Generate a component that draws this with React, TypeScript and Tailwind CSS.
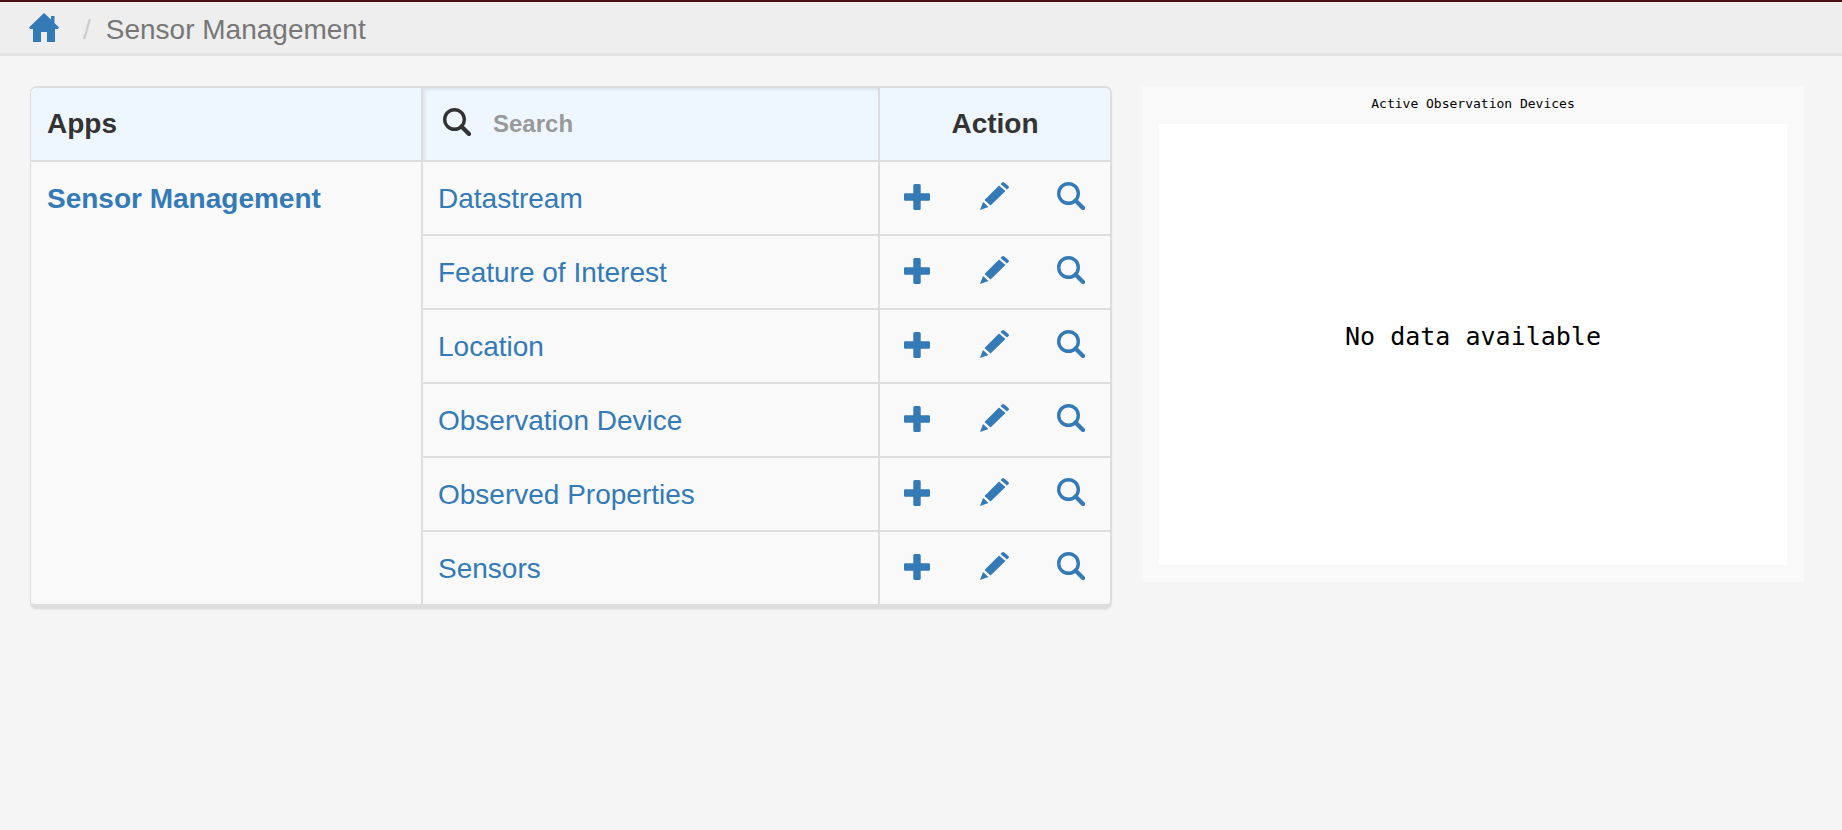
const rows = [
  "Datastream",
  "Feature of Interest",
  "Location",
  "Observation Device",
  "Observed Properties",
  "Sensors",
];

function HomeIcon() {
  return (
    <svg width="30" height="29" viewBox="0 0 30 29" className="fill-[#337ab7]">
      <path d="M15 0 L22 6.5 V3 H25.500 V10 L30 14.500 L29 16 H26 V29 H18 V19 H12 V29 H4 V16 H1 L0 14.500 Z" />
    </svg>
  );
}

function PlusIcon() {
  return (
    <svg width="26" height="26" viewBox="0 0 26 26" className="fill-[#337ab7]">
      <path d="M10.500 0 H15.200 Q16.700 0 16.700 1.500 V9.300 H24.800 Q26 9.300 26 10.500 V15.500 Q26 16.700 24.800 16.700 H16.700 V24.500 Q16.700 26 15.200 26 H10.800 Q9.300 26 9.300 24.500 V16.700 H1.200 Q0 16.700 0 15.500 V10.500 Q0 9.300 1.200 9.300 H9.300 V1.500 Q9.300 0 10.800 0 Z" />
    </svg>
  );
}

function PencilIcon() {
  return (
    <svg width="29" height="28" viewBox="0 0 29 28" className="fill-[#337ab7]">
      <path d="M22 0.500 L23.500 0 L28.500 4 L29 5.500 L27 7.500 L20.500 2 Z" />
      <path d="M19 3.500 L25.500 9 L10.500 23.500 L4.500 18 Z" />
      <path d="M3 20 L8.500 25 L0 28 Z" />
    </svg>
  );
}

function SearchIcon({ color }: { color: string }) {
  return (
    <svg width="28" height="28" viewBox="0 0 28 28" fill="none" stroke={color}>
      <circle cx="11.500" cy="11.500" r="9.800" strokeWidth="3.400" />
      <path d="M18.500 18.500 L26 26" strokeWidth="4.200" strokeLinecap="round" />
    </svg>
  );
}

export default function App() {
  return (
    <div className="min-h-[830px] bg-[#f5f5f5] font-['Liberation_Sans',Arial,sans-serif] text-[#333]">
      {/* Breadcrumb */}
      <div className="h-[56px] flex items-center pl-[29px] bg-[#eeeeee] border-t-2 border-t-[#4a1014] border-b-[3px] border-b-[#e3e3e3]">
        <HomeIcon />
        <span className="ml-[24px] pt-[5px] text-[28px] text-[#ccc]">/</span>
        <span className="ml-[15px] pt-[5px] text-[28px] text-[#777]">Sensor Management</span>
      </div>

      <div className="flex items-start gap-[30px] pl-[30px] pr-[38px] pt-[30px]">
        {/* Apps table */}
        <div className="w-[1082px] flex rounded-[7px] border-t-2 border-l border-r-2 border-b-[5px] border-[#ddd] bg-[#f9f9f9] overflow-hidden shadow-[0_1px_2px_rgba(0,0,0,0.06)]">
          <div className="w-[390px]">
            <div className="h-[74px] flex items-center pl-[16px] bg-[#eef7ff] border-b-2 border-[#ddd] text-[28px] font-bold">
              Apps
            </div>
            <div className="pl-[16px] pt-[16px] text-[28px] font-bold text-[#337ab7]">Sensor Management</div>
          </div>

          <div className="w-[457px] border-l-2 border-[#ddd]">
            <div className="h-[74px] flex items-center gap-[22px] pl-[20px] bg-[#eef7ff] border-b-2 border-[#ddd] shadow-[inset_2px_2px_3px_rgba(0,0,0,0.08)]">
              <div className="mb-[4px]">
                <SearchIcon color="#333" />
              </div>
              <span className="text-[24px] font-bold text-[#999]">Search</span>
            </div>
            {rows.map((row, i) => (
              <div
                key={row}
                className={`flex items-center pl-[15px] pt-[2px] text-[28px] text-[#337ab7] ${i < rows.length - 1 ? "h-[74px] border-b-2 border-[#ddd]" : "h-[72px]"}`}
              >
                {row}
              </div>
            ))}
          </div>

          <div className="flex-1 border-l-2 border-[#ddd]">
            <div className="h-[74px] flex items-center justify-center bg-[#eef7ff] border-b-2 border-[#ddd] text-[28px] font-bold">
              Action
            </div>
            {rows.map((row, i) => (
              <div
                key={row}
                className={`flex items-center gap-[50px] pl-[24px] pb-[2px] ${i < rows.length - 1 ? "h-[74px] border-b-2 border-[#ddd]" : "h-[72px]"}`}
              >
                <PlusIcon />
                <div className="mb-[2px]">
                  <PencilIcon />
                </div>
                <div className="-ml-[2px] mb-[2px]">
                  <SearchIcon color="#337ab7" />
                </div>
              </div>
            ))}
          </div>
        </div>

        {/* Chart panel */}
        <div className="flex-1 h-[496px] bg-[#f9f9f9] px-[17px] pb-[17px] flex flex-col font-['DejaVu_Sans_Mono',monospace]">
          <div className="h-[38px] pb-[2px] flex items-center justify-center text-[13px] text-black">
            Active Observation Devices
          </div>
          <div className="flex-1 bg-white flex items-center justify-center text-[25px] text-black pb-[15px]">
            No data available
          </div>
        </div>
      </div>
    </div>
  );
}
